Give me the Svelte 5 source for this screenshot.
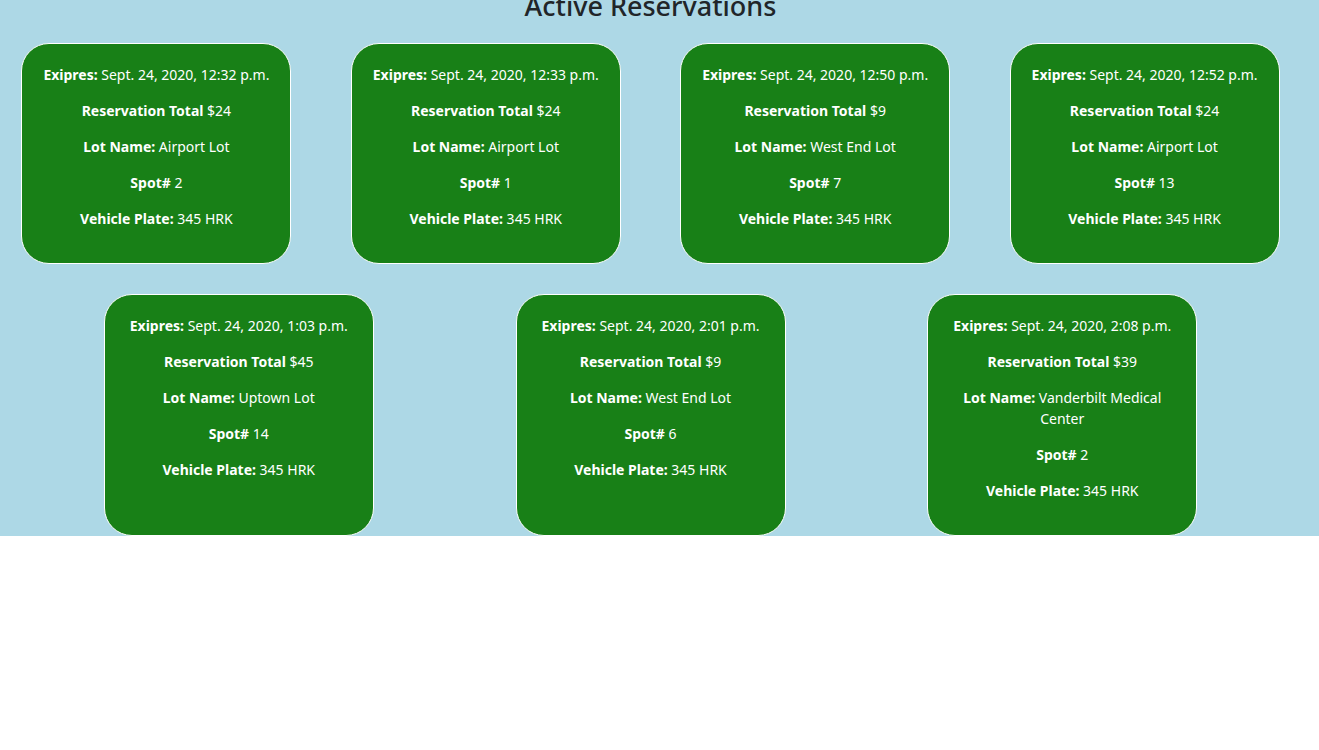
<script>
  const reservations = [
    { expires: 'Sept. 24, 2020, 12:32 p.m.', total: 24, lot: 'Airport Lot', spot: 2 },
    { expires: 'Sept. 24, 2020, 12:33 p.m.', total: 24, lot: 'Airport Lot', spot: 1 },
    { expires: 'Sept. 24, 2020, 12:50 p.m.', total: 9, lot: 'West End Lot', spot: 7 },
    { expires: 'Sept. 24, 2020, 12:52 p.m.', total: 24, lot: 'Airport Lot', spot: 13 },
    { expires: 'Sept. 24, 2020, 1:03 p.m.', total: 45, lot: 'Uptown Lot', spot: 14 },
    { expires: 'Sept. 24, 2020, 2:01 p.m.', total: 9, lot: 'West End Lot', spot: 6 },
    { expires: 'Sept. 24, 2020, 2:08 p.m.', total: 39, lot: 'Vanderbilt Medical Center', spot: 2 }
  ];
  const plate = '345 HRK';
</script>

<main>
  <div class="content">
    <h1>Active Reservations</h1>
    <div class="cards">
      {#each reservations as r}
        <article>
          <p><strong>Exipres:</strong> {r.expires}</p>
          <p><strong>Reservation Total</strong> ${r.total}</p>
          <p><strong>Lot Name:</strong> {r.lot}</p>
          <p><strong>Spot#</strong> {r.spot}</p>
          <p><strong>Vehicle Plate:</strong> {plate}</p>
        </article>
      {/each}
    </div>
  </div>
</main>

<style>
  :global(body) {
    margin: 0;
    background: #fff;
    overflow-x: hidden;
  }

  main {
    display: flow-root;
    background: lightblue;
    color: #212529;
    font-family: "Segoe UI", "Noto Sans", sans-serif;
    text-align: center;
  }

  .content {
    margin: 0 9px 0 -9px;
  }

  h1 {
    margin: -12px 0 0;
    font-size: 27px;
    line-height: 36px;
    font-weight: 500;
  }

  .cards {
    display: flex;
    flex-wrap: wrap;
    justify-content: space-evenly;
    row-gap: 30px;
    margin-top: 19px;
  }

  article {
    box-sizing: border-box;
    width: 270px;
    margin: 0 29px;
    padding: 20px 20px 34px;
    display: flex;
    flex-direction: column;
    gap: 15px;
    border: 1px solid #fff;
    border-radius: 28px;
    background: #188017;
    color: #fff;
    font-size: 14px;
    line-height: 21px;
  }

  p {
    margin: 0;
  }

  strong {
    font-weight: 700;
  }
</style>
